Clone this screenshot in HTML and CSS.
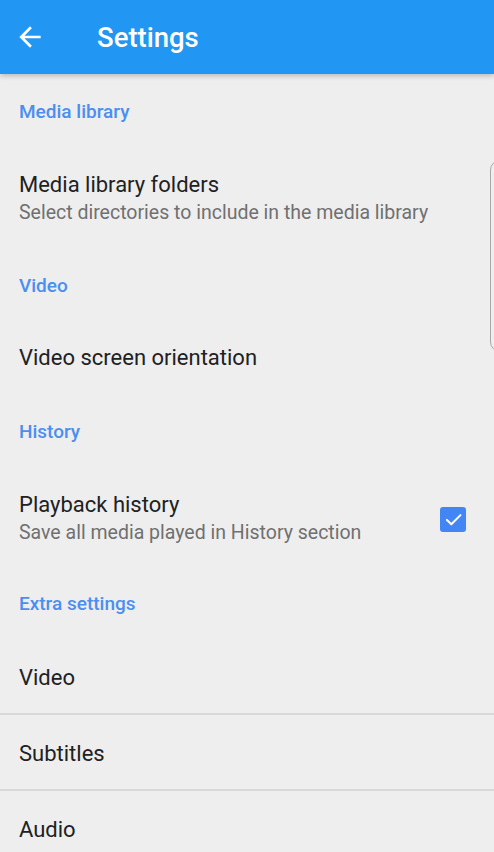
FILE: index.html
```html
<!DOCTYPE html>
<html lang="en">
<head>
    <meta charset="UTF-8">
    <meta name="viewport" content="width=device-width, initial-scale=1.0">
    <title>Settings</title>
    <link rel="stylesheet" href="styles.css">
</head>
<body>

<header class="app-bar">
    <button class="back-btn" aria-label="Back">
        <svg width="32" height="32" viewBox="0 0 24 24">
            <path d="M20 11H7.830l5.59-5.59L12 4l-8 8 8 8 1.41-1.41L7.83 13H20v-2z" fill="#fff"/>
        </svg>
    </button>
    <h1 class="title">Settings</h1>
</header>

<main class="prefs">
    <div class="category">Media library</div>
    <div class="pref two-line">
        <div class="pref-text">
            <div class="pref-title">Media library folders</div>
            <div class="pref-summary">Select directories to include in the media library</div>
        </div>
    </div>

    <div class="category">Video</div>
    <div class="pref">
        <div class="pref-text">
            <div class="pref-title">Video screen orientation</div>
        </div>
    </div>

    <div class="category">History</div>
    <div class="pref two-line">
        <div class="pref-text">
            <div class="pref-title">Playback history</div>
            <div class="pref-summary">Save all media played in History section</div>
        </div>
        <span class="checkbox">
            <svg width="21" height="21" viewBox="0 0 24 24">
                <path d="M4.5 12.5l5 5L20 7" fill="none" stroke="#fff" stroke-width="2.3" stroke-linecap="round" stroke-linejoin="round"/>
            </svg>
        </span>
    </div>

    <div class="category tight">Extra settings</div>
    <div class="pref screen">
        <div class="pref-title">Video</div>
    </div>
    <div class="pref screen">
        <div class="pref-title">Subtitles</div>
    </div>
    <div class="pref screen">
        <div class="pref-title">Audio</div>
    </div>
</main>

<div class="edge-handle"></div>

</body>
</html>
```

FILE: styles.css
```css
body {
    font-family: Roboto, "Noto Sans", sans-serif;
    margin: 0;
    padding: 0;
    background-color: #eeeeee;
    overflow: hidden;
    height: 852px;
}
.app-bar {
    background-color: #2196f3;
    height: 74px;
    display: flex;
    align-items: center;
    box-shadow: 0 2px 5px rgba(0, 0, 0, 0.22);
    position: relative;
    z-index: 1;
}
.back-btn {
    background: none;
    border: none;
    padding: 0;
    margin-left: 14px;
    width: 32px;
    height: 32px;
    display: flex;
    align-items: center;
    justify-content: center;
}
.back-btn svg {
    width: 32px;
    height: 32px;
}
.title {
    color: #fff;
    font-size: 27.5px;
    font-weight: 500;
    margin: 0 0 0 51px;
}
.category {
    height: 74px;
    display: flex;
    align-items: center;
    padding-left: 19px;
    color: #4b8ef1;
    font-size: 19px;
    font-weight: 500;
}
.category.tight {
    height: 71px;
}
.pref {
    height: 72px;
    display: flex;
    align-items: center;
    justify-content: space-between;
    padding: 0 28px 0 19px;
}
.pref.two-line {
    height: 100px;
    padding-top: 2px;
    height: 98px;
}
.pref.screen {
    height: 71px;
    padding-top: 3px;
    border-bottom: 2px solid #d8d8d8;
}
.pref.screen:last-child {
    border-bottom: none;
}
.pref-title {
    color: #212121;
    font-size: 22px;
    line-height: 28px;
}
.pref-summary {
    color: #707070;
    font-size: 19.5px;
    line-height: 28px;
}
.checkbox {
    width: 26px;
    height: 25px;
    border-radius: 3px;
    background-color: #4285f4;
    display: flex;
    align-items: center;
    justify-content: center;
}
.edge-handle {
    position: absolute;
    top: 160px;
    right: -16px;
    width: 18px;
    height: 190px;
    border: 1px solid #a8a8a8;
    border-radius: 14px;
}
```
